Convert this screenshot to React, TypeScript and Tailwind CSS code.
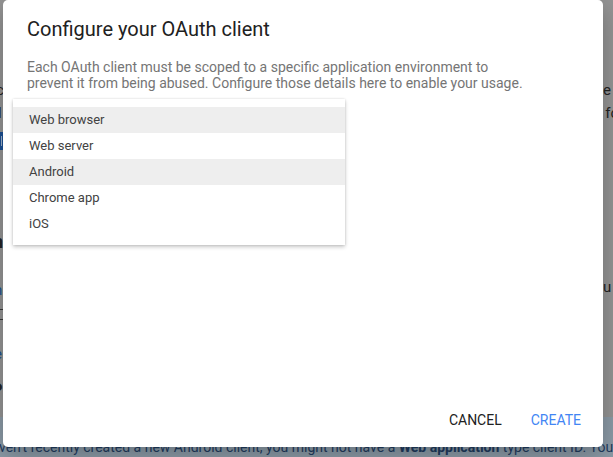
import React from "react";

const items = [
  { label: "Web browser", active: true },
  { label: "Web server", active: false },
  { label: "Android", active: true },
  { label: "Chrome app", active: false },
  { label: "iOS", active: false },
];

export default function App() {
  return (
    <div className="relative h-[457px] w-[613px] overflow-hidden bg-[#949494] font-['Roboto','Liberation_Sans',sans-serif]">
      {/* dimmed page behind the dialog */}
      <div className="flex h-full flex-col text-[15px] text-[#232323]">
        <div className="mt-[81px] flex h-[18px] items-center justify-between leading-[18px]">
          <span className="ml-[-4px]">c</span>
          <span className="mr-[2px]">e</span>
        </div>
        <div className="mt-[5px] flex h-[18px] items-center justify-between leading-[18px]">
          <span className="ml-[-2px]">l</span>
          <span className="mr-[-6px]">fo</span>
        </div>
        <div className="mt-[10px] flex h-[18px] items-center">
          <div className="ml-[-9px] flex h-[18px] w-[12px] items-center justify-end bg-[#1b4f93] pr-[1px]">
            <div className="h-[10px] w-[1px] bg-[#9fb3cc]" />
          </div>
        </div>
        <div className="mt-[82px] flex h-[20px] items-center text-[18px] font-bold leading-[20px]">
          <span className="ml-[-7px]">n</span>
        </div>
        <div className="mt-[26px] flex h-[22px] justify-between">
          <span className="ml-[-6px] self-end text-[15px] leading-[14px] text-[#1a4f8f]">n</span>
          <span className="mr-[-6px] self-start leading-[18px]">u I</span>
        </div>
        <div className="mt-[12px] flex h-[11px]">
          <div className="h-[11px] w-[6px] border-y border-[#3a3a3a]" />
        </div>
        <div className="mt-[25px] flex h-[18px] items-center leading-[18px] text-[#1a4f8f]">
          <span className="ml-[-6px]">e</span>
        </div>
        <div className="mt-[18px] flex h-[18px] items-center text-[18px] font-bold leading-[18px]">
          <span className="ml-[-9px]">P</span>
        </div>
        <div className="mt-[18px] flex-1 bg-[#8b9aa6] pt-[20px]">
          <p className="ml-[-1px] whitespace-nowrap text-[14px] leading-[20px] text-[#1f3b5e]">
            ven't recently created a new Android client, you might not have a{" "}
            <b className="font-bold">Web application</b> type client ID. You
          </p>
        </div>
      </div>

      {/* dialog */}
      <div className="absolute left-[3px] top-0 flex h-[447px] w-[600px] flex-col rounded-[5px] bg-white shadow-[0_8px_24px_rgba(0,0,0,0.25)]">
        <div className="px-[24px]">
          <h2 className="pt-[15px] text-[20px] font-normal leading-[28px] text-[#212121]">
            Configure your OAuth client
          </h2>
          <p className="mt-[16px] text-[14px] leading-[16px] text-[#757575]">
            Each OAuth client must be scoped to a specific application environment to
            <br />
            prevent it from being abused. Configure those details here to enable your usage.
          </p>
        </div>

        <div className="ml-[10px] mt-[8px] w-[332px] bg-white py-[8px] shadow-[0_2px_4px_rgba(0,0,0,0.22),0_0_2px_rgba(0,0,0,0.12)]">
          {items.map((it) => (
            <div
              key={it.label}
              className={
                "flex h-[26px] items-center pl-[16px] text-[13px] text-[#424242] " +
                (it.active ? "bg-[#eeeeee]" : "bg-white")
              }
            >
              {it.label}
            </div>
          ))}
        </div>

        <div className="mt-auto flex justify-end gap-[13px] pb-[9px] pr-[14px]">
          <button className="flex h-[36px] items-center px-[8px] text-[14px] font-normal uppercase text-[#212121]">
            Cancel
          </button>
          <button className="flex h-[36px] items-center px-[8px] text-[14px] font-normal uppercase text-[#4285f4]">
            Create
          </button>
        </div>
      </div>
    </div>
  );
}
